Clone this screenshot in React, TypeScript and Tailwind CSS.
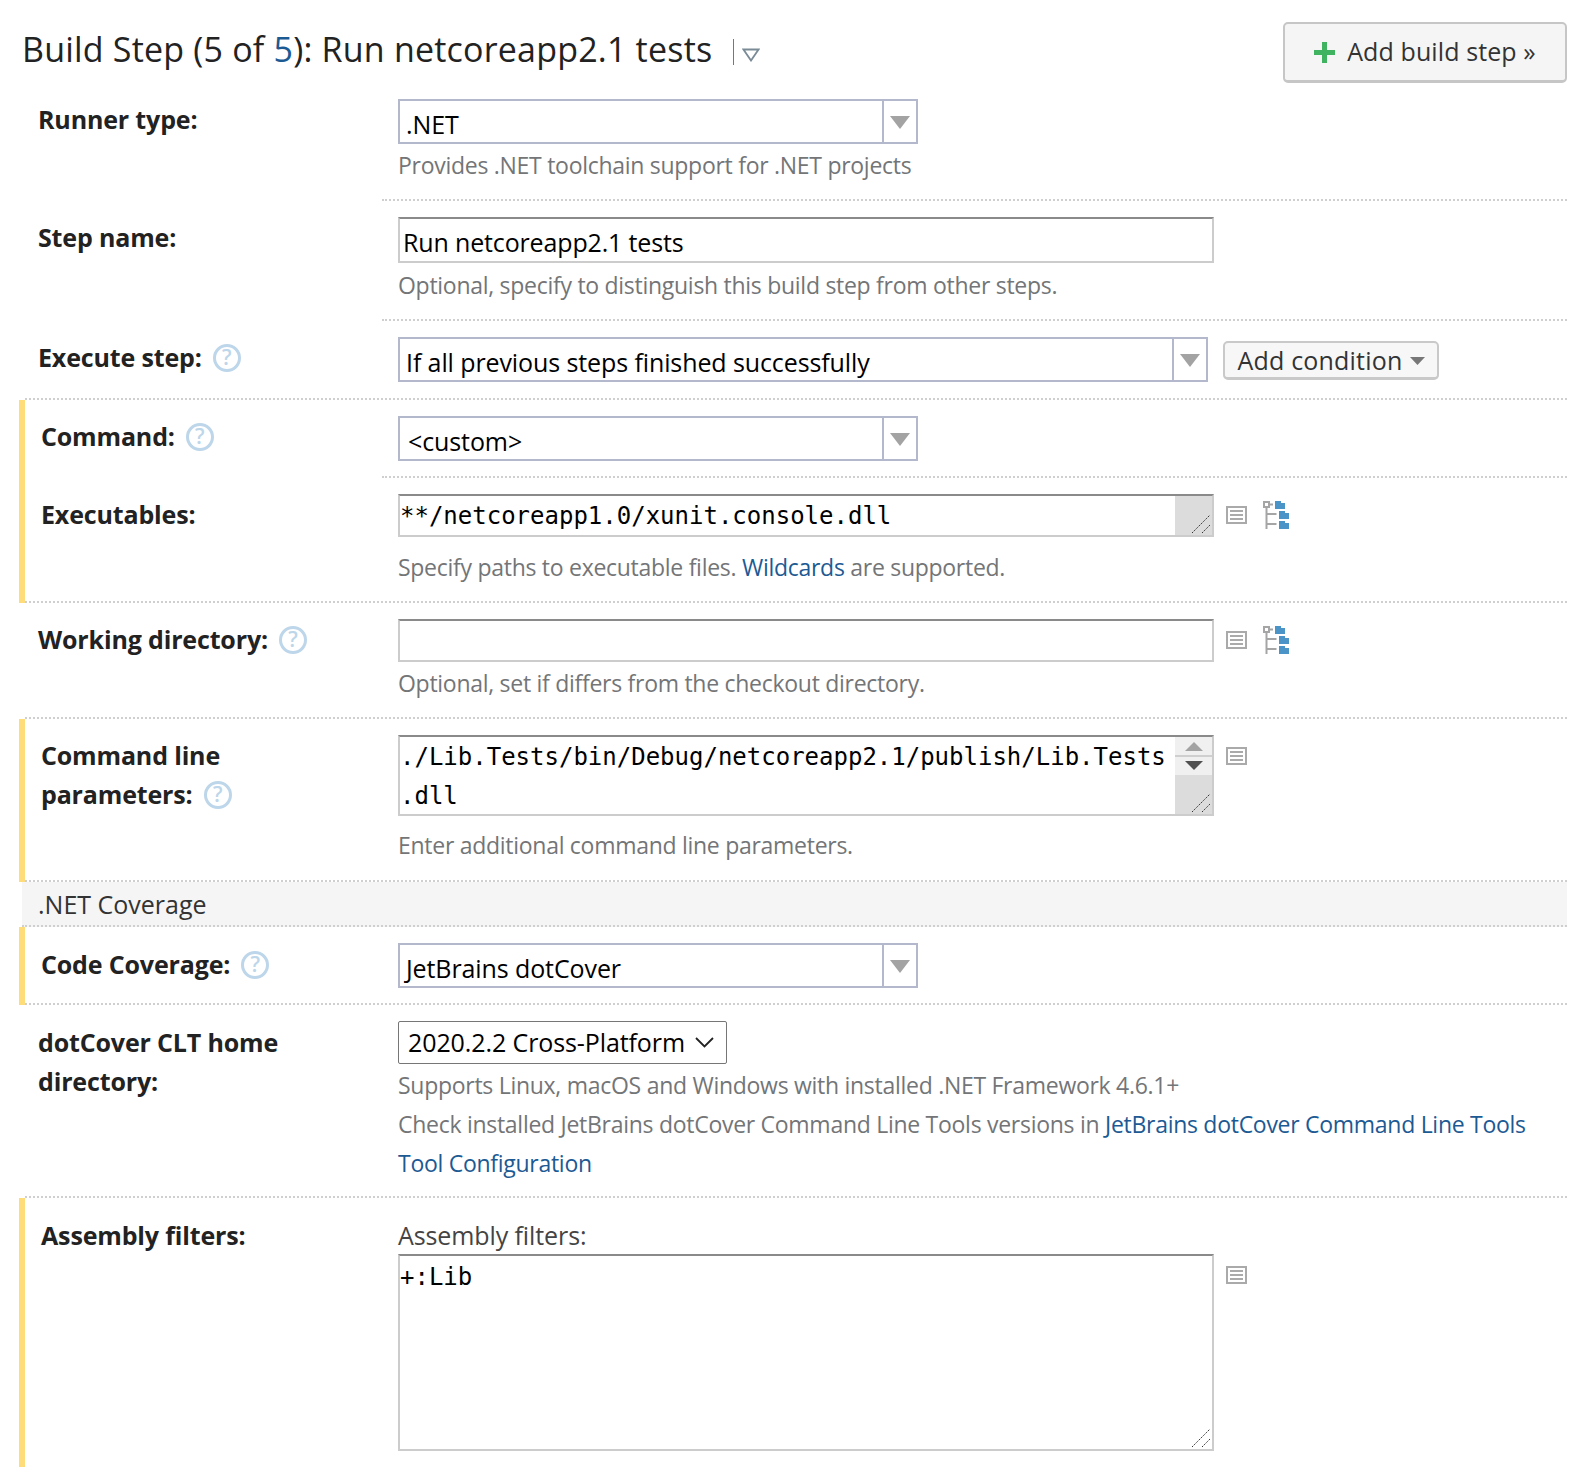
import type { ReactNode } from "react";

const sans = "font-['Open_Sans',sans-serif]";
const mono = "font-['DejaVu_Sans_Mono',monospace]";

const Help = () => (
  <span className="ml-[11px] inline-flex h-[28px] w-[28px] shrink-0 items-center justify-center rounded-full border-[3px] border-[#bdd6ea] text-[21px] font-semibold leading-none text-[#bdd6ea]">
    ?
  </span>
);

const Hint = ({ children, className = "" }: { children: ReactNode; className?: string }) => (
  <div className={`h-[39px] text-[23px] leading-[39px] tracking-[-0.28px] text-[#737577] ${className}`}>{children}</div>
);

const A = ({ children }: { children: ReactNode }) => <span className="text-[#1c5a94]">{children}</span>;

const Label = ({
  children,
  help,
  yellow,
  pt = "pt-[17px]",
}: {
  children: ReactNode;
  help?: boolean;
  yellow?: boolean;
  pt?: string;
}) => (
  <div className={`w-[357px] shrink-0 text-[25px] font-bold leading-[39px] tracking-[-0.15px] text-[#222] ${pt} ${yellow ? "pl-[16px]" : "pl-[13px]"}`}>
    <span className="inline-flex items-center">
      {children}
      {help && <Help />}
    </span>
  </div>
);

const Row = ({
  label,
  help,
  yellow,
  full,
  pb = "pb-[15px]",
  pt,
  children,
}: {
  label: ReactNode;
  help?: boolean;
  yellow?: boolean;
  full?: boolean;
  pb?: string;
  pt?: string;
  children: ReactNode;
}) => (
  <div className={`flex ${full ? "border-b-2 border-dotted border-[#cfcfcf]" : ""}`}>
    <Label help={help} yellow={yellow} pt={pt}>
      {label}
    </Label>
    <div className={`flex-1 pl-4 pt-4 ${pb} ${full ? "" : "border-b-2 border-dotted border-[#cfcfcf]"}`}>{children}</div>
  </div>
);

const Select = ({ text, className, pad = "pl-[6px]" }: { text: string; className: string; pad?: string }) => (
  <div className={`flex h-[45px] border-2 border-[#b4b8cc] bg-white ${className}`}>
    <div className={`flex-1 pt-[4px] text-[25px] leading-[38px] tracking-[-0.1px] text-black ${pad}`}>{text}</div>
    <div className="flex w-[34px] items-center justify-center border-l-2 border-[#b4b8cc] pt-[2px]">
      <svg width="20" height="13" viewBox="0 0 20 13">
        <path d="M0 0h20L10 13z" fill="#a3a3a3" />
      </svg>
    </div>
  </div>
);

const Grip = () => (
  <svg className="absolute bottom-[1px] right-[1px]" width="20" height="20" viewBox="0 0 20 20" fill="none">
    <path d="M1 19 19 1M11 19l8-8" stroke="#333" strokeWidth="1" strokeDasharray="1.5 1" />
  </svg>
);

const ListIcon = () => (
  <svg width="21" height="18" viewBox="0 0 21 18" fill="none" className="shrink-0">
    <rect x="1" y="1" width="19" height="16" stroke="#aaa" strokeWidth="2" />
    <path d="M4 5h13M4 9h13M4 13h13" stroke="#aaa" strokeWidth="2" />
  </svg>
);

const TreeIcon = () => (
  <svg width="26" height="28" viewBox="0 0 26 28" fill="none" className="ml-[16px] shrink-0">
    <rect x="1" y="1" width="5" height="5" stroke="#a5a5a5" strokeWidth="2" />
    <path d="M3.500 6v22M3.500 13h10M3.500 23h10M6 3.500h4" stroke="#a5a5a5" strokeWidth="2" />
    <path d="M12 0h6v2h4v6H12zM16 10h6v2h4v6H16zM16 20h6v2h4v6H16z" fill="#4a94c8" />
  </svg>
);

export default function App() {
  return (
    <div className={`h-[1467px] overflow-hidden bg-white pl-[19px] pr-[13px] ${sans}`}>
      <div className="flex h-[83px] items-start justify-between">
        <div className="flex items-center pl-[3px] pt-[24px]">
          <span className="text-[34px] leading-[50px] tracking-[0.2px] text-[#222]">
            Build Step (5 of <A>5</A>): Run netcoreapp2.1 tests
          </span>
          <span className="ml-[21px] mt-[6px] h-[26px] w-[1px] bg-[#777]" />
          <svg className="ml-[8px] mt-[12px]" width="18" height="14" viewBox="0 0 18 14" fill="none">
            <path d="M1.500 1.500h15L9 12.500z" stroke="#7b8b96" strokeWidth="1.8" />
          </svg>
        </div>
        <div className="mt-[22px] flex h-[61px] w-[284px] items-center justify-center rounded-[5px] border-2 border-b-[3px] border-[#c6c6c6] bg-[#f5f5f5] text-[25px] tracking-[0.1px] text-[#333]">
          <svg className="mr-[12px]" width="21" height="21" viewBox="0 0 21 21">
            <path d="M8 0h5v8h8v5h-8v8H8v-8H0V8h8z" fill="#3fb35f" />
          </svg>
          Add build step »
        </div>
      </div>

      <div className="pl-[6px]">
        <Row label="Runner type:" pb="pb-[14px]">
          <Select text=".NET" className="w-[520px]" />
          <Hint className="mt-[2px]">Provides .NET toolchain support for .NET projects</Hint>
        </Row>
        <Row label="Step name:" pb="pb-[14px]">
          <div className="h-[46px] w-[816px] border-2 border-[#ccc] border-t-[#8a8a8a] pl-[3px] pt-[4px] text-[25px] leading-[38px] tracking-[-0.15px] text-black">
            Run netcoreapp2.1 tests
          </div>
          <Hint className="mt-[3px]">Optional, specify to distinguish this build step from other steps.</Hint>
        </Row>
        <Row label="Execute step:" help full pb="pb-[16px]">
          <div className="flex items-start">
            <Select text="If all previous steps finished successfully" className="w-[810px]" />
            <div className="ml-[15px] mt-[4px] flex h-[39px] w-[216px] items-center justify-center rounded-[5px] border-2 border-b-[3px] border-[#c9c9c9] bg-[#f7f7f7] pt-[2px] text-[25px] tracking-[0.2px] text-[#333]">
              Add condition
              <svg className="ml-[7px]" width="15" height="8" viewBox="0 0 15 8">
                <path d="M0 0h15L7.500 8z" fill="#777" />
              </svg>
            </div>
          </div>
        </Row>
      </div>

      <div className="border-l-[6px] border-[#ffdc7a]">
        <Row label="Command:" help yellow>
          <Select text="<custom>" className="w-[520px]" pad="pl-[8px]" />
        </Row>
        <Row label="Executables:" yellow full pb="pb-[14px]">
          <div className="flex items-center">
            <div className="relative h-[43px] w-[816px] border-2 border-[#ccc] border-t-[#8a8a8a] pt-[2px]">
              <span className={`text-[24px] leading-[36px] text-black ${mono}`}>**/netcoreapp1.0/xunit.console.dll</span>
              <div className="absolute bottom-0 right-0 top-0 w-[37px] bg-[#dcdcdc]">
                <Grip />
              </div>
            </div>
            <div className="-mt-[2px] ml-[12px] flex items-center">
              <ListIcon />
              <TreeIcon />
            </div>
          </div>
          <Hint className="mt-[11px]">
            Specify paths to executable files. <A>Wildcards</A> are supported.
          </Hint>
        </Row>
      </div>

      <div className="pl-[6px]">
        <Row label="Working directory:" help full pb="pb-[14px]">
          <div className="flex items-center">
            <div className="h-[43px] w-[816px] border-2 border-[#ccc] border-t-[#8a8a8a]" />
            <div className="-mt-[2px] ml-[12px] flex items-center">
              <ListIcon />
              <TreeIcon />
            </div>
          </div>
          <Hint className="mt-[2px]">Optional, set if differs from the checkout directory.</Hint>
        </Row>
      </div>

      <div className="border-l-[6px] border-[#ffdc7a]">
        <Row
          label={
            <span>
              Command line
              <br />
              <span className="inline-flex items-center">
                parameters:
                <Help />
              </span>
            </span>
          }
          yellow
          full
        >
          <div className="flex items-start">
            <div className="relative h-[81px] w-[816px] border-2 border-[#ccc] border-t-[#8a8a8a] pt-[1px]">
              <div className={`text-[24px] leading-[39px] text-black ${mono}`}>
                ./Lib.Tests/bin/Debug/netcoreapp2.1/publish/Lib.Tests
                <br />
                .dll
              </div>
              <div className="absolute bottom-0 right-0 top-0 flex w-[37px] flex-col bg-[#f0f0f0]">
                <div className="flex h-[38px] flex-col items-center justify-center">
                  <svg width="18" height="9" viewBox="0 0 18 9">
                    <path d="M9 0l9 9H0z" fill="#a3a3a3" />
                  </svg>
                  <div className="my-[4px] h-[2px] w-full bg-[#cfcfcf]" />
                  <svg width="18" height="9" viewBox="0 0 18 9">
                    <path d="M0 0h18L9 9z" fill="#505050" />
                  </svg>
                </div>
                <div className="relative flex-1 bg-[#dcdcdc]">
                  <Grip />
                </div>
              </div>
            </div>
            <div className="ml-[12px] mt-[12px] flex items-center">
              <ListIcon />
            </div>
          </div>
          <Hint className="mt-[10px]">Enter additional command line parameters.</Hint>
        </Row>
      </div>

      <div className="ml-[3px] h-[45px] border-b-2 border-dotted border-[#cfcfcf] bg-[#f5f5f5] pl-[16px] pt-[3px] text-[25px] leading-[39px] text-[#333]">
        .NET Coverage
      </div>

      <div className="border-l-[6px] border-[#ffdc7a]">
        <Row label="Code Coverage:" help yellow full pt="pt-[18px]">
          <Select text="JetBrains dotCover" className="w-[520px]" />
        </Row>
      </div>

      <div className="pl-[6px]">
        <Row
          label={
            <span>
              dotCover CLT home
              <br />
              directory:
            </span>
          }
          full
          pb="pb-[13px]"
          pt="pt-[18px]"
        >
          <div className="flex h-[43px] w-[329px] items-center justify-between rounded-[2px] border border-[#767676] pl-[9px] pr-[12px] text-[25px] tracking-[-0.1px] text-black">
            2020.2.2 Cross-Platform
            <svg width="19" height="11" viewBox="0 0 19 11" fill="none">
              <path d="M1 1l8.500 8.500L18 1" stroke="#222" strokeWidth="1.8" />
            </svg>
          </div>
          <Hint className="mt-[2px]">Supports Linux, macOS and Windows with installed .NET Framework 4.6.1+</Hint>
          <Hint>
            Check installed JetBrains dotCover Command Line Tools versions in <A>JetBrains dotCover Command Line Tools</A>
          </Hint>
          <Hint>
            <A>Tool Configuration</A>
          </Hint>
        </Row>
      </div>

      <div className="border-l-[6px] border-[#ffdc7a]">
        <div className="flex pb-[20px]">
          <Label yellow pt="pt-[18px]">
            Assembly filters:
          </Label>
          <div className="flex-1 pl-4 pt-[18px]">
            <div className="h-[38px] text-[25px] leading-[39px] tracking-[-0.1px] text-[#444]">Assembly filters:</div>
            <div className="flex items-start">
              <div className={`relative h-[197px] w-[816px] border-2 border-[#ccc] border-t-[#8a8a8a] pt-[2px] text-[24px] leading-[39px] text-black ${mono}`}>
                +:Lib
                <Grip />
              </div>
              <div className="ml-[12px] mt-[12px] flex items-center">
                <ListIcon />
              </div>
            </div>
          </div>
        </div>
      </div>
    </div>
  );
}
